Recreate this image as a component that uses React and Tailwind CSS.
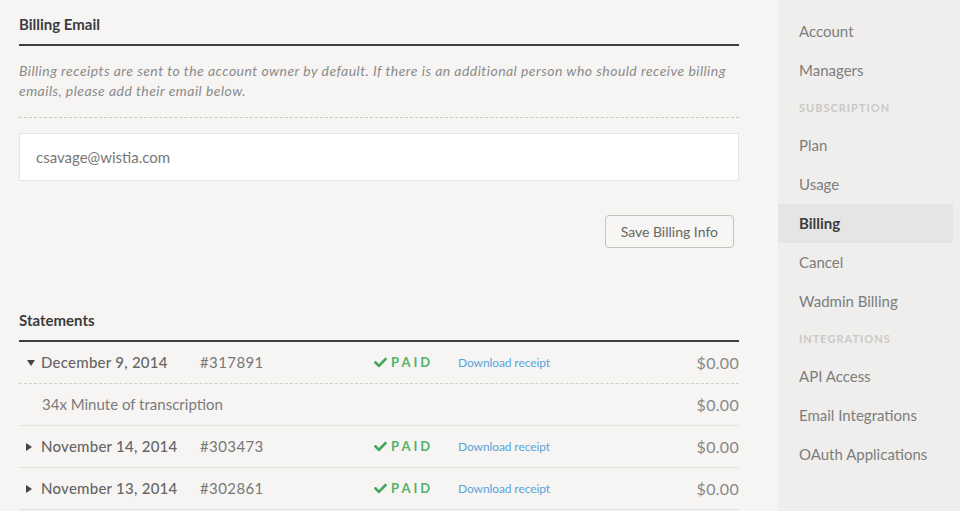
import { FaCheck } from "react-icons/fa";

const statements = [
  { date: "December 9, 2014", num: "#317891", amount: "$0.00", open: true, items: [{ label: "34x Minute of transcription", amount: "$0.00" }] },
  { date: "November 14, 2014", num: "#303473", amount: "$0.00" },
  { date: "November 13, 2014", num: "#302861", amount: "$0.00" },
];

const nav = [
  { label: "Account" },
  { label: "Managers" },
  { label: "Subscription", header: true },
  { label: "Plan" },
  { label: "Usage" },
  { label: "Billing", active: true },
  { label: "Cancel" },
  { label: "Wadmin Billing" },
  { label: "Integrations", header: true },
  { label: "API Access" },
  { label: "Email Integrations" },
  { label: "OAuth Applications" },
];

const Caret = ({ open }) => (
  <svg width="8" height="8" viewBox="0 0 8 8" className="shrink-0">
    {open ? <polygon points="0,1 8,1 4,7" fill="#444" /> : <polygon points="1,0 7,4 1,8" fill="#444" />}
  </svg>
);

const StatementRow = ({ s }) => (
  <>
    <div
      className={`flex items-center h-[42px] text-[15px] ${
        s.open ? "border-b border-dashed border-[#cfcecb]" : "border-b border-[#e3e2df]"
      }`}
    >
      <div className={`w-[22px] flex justify-end pr-[6px] ${s.open ? "" : "pr-[8px]"}`}>
        <Caret open={s.open} />
      </div>
      <div className="w-[159px] text-[#666] font-medium tracking-[0.25px]">{s.date}</div>
      <div className="w-[174px] text-[#777] tracking-[0.4px]">{s.num}</div>
      <div className="w-[84px] flex items-center gap-[4px] text-[#52b26a]">
        <FaCheck className="w-[13px] h-[13px] text-[#43a85c]" />
        <span className="text-[13px] font-bold tracking-[3px]">PAID</span>
      </div>
      <a className="text-[12px] text-[#5aa4db] tracking-[-0.1px]">Download receipt</a>
      <div className="ml-auto text-[16px] text-[#888] tracking-[0.3px]">{s.amount}</div>
    </div>
    {s.open &&
      s.items.map((it) => (
        <div key={it.label} className="flex items-center h-[42px] border-b border-[#e3e2df] text-[15px] text-[#7b7b7b] pl-[23px]">
          <span>{it.label}</span>
          <span className="ml-auto text-[16px] text-[#888] tracking-[0.3px]">{it.amount}</span>
        </div>
      ))}
  </>
);

export default function App() {
  return (
    <div
      className="flex h-[511px] overflow-hidden bg-[#f6f5f3]"
      style={{ fontFamily: "Lato, 'Open Sans', sans-serif" }}
    >
      <main className="w-[778px] pl-[19px] pr-[39px] pt-[14px]">
        <h2 className="text-[15px] leading-[20px] font-bold text-[#3b3c40] pb-[10px] border-b-2 border-[#3d3e44]">
          Billing Email
        </h2>
        <p className="mt-[15px] pb-[16px] text-[14px] leading-[20px] italic tracking-[0.45px] text-[#8b8b8b] border-b border-dashed border-[#c9c8c5]">
          Billing receipts are sent to the account owner by default. If there is an additional person who should receive billing emails, please add their email below.
        </p>
        <input
          defaultValue="csavage@wistia.com"
          className="mt-[15px] w-full h-[48px] bg-white border border-[#e7e6e3] px-[16px] text-[15px] text-[#777] outline-none"
        />
        <div className="flex justify-end mt-[34px] pr-[5px]">
          <button className="h-[33px] px-[15px] border border-[#c4c3c0] rounded-[4px] text-[14px] text-[#666] bg-[#f7f6f4]">
            Save Billing Info
          </button>
        </div>
        <h2 className="mt-[62px] text-[15px] leading-[20px] font-bold text-[#3b3c40] pb-[10px] border-b-2 border-[#3d3e44]">
          Statements
        </h2>
        {statements.map((s) => (
          <StatementRow key={s.num} s={s} />
        ))}
      </main>
      <aside className="flex-1 bg-[#efeeec] pt-[12px] pr-[7px]">
        {nav.map((n) =>
          n.header ? (
            <div key={n.label} className="h-[36px] flex items-center pl-[21px] text-[11px] font-bold uppercase tracking-[1px] text-[#cac9c6]">
              {n.label}
            </div>
          ) : (
            <div
              key={n.label}
              className={`h-[39px] flex items-center pl-[21px] text-[15px] ${
                n.active ? "bg-[#e6e5e3] text-[#3b3c40] font-bold" : "text-[#7d7d7d]"
              }`}
            >
              {n.label}
            </div>
          )
        )}
      </aside>
    </div>
  );
}
